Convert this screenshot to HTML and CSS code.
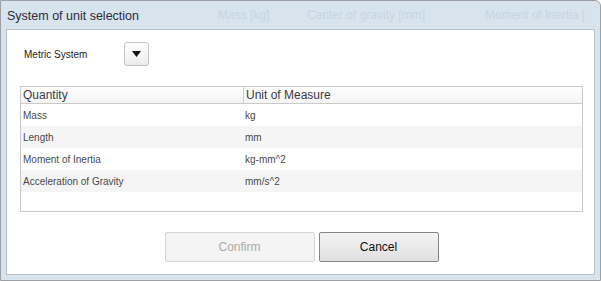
FILE: index.html
```html
<!DOCTYPE html>
<html lang="en">
<head>
  <meta charset="UTF-8">
  <title>System of unit selection</title>
  <link rel="stylesheet" href="styles.css">
</head>
<body>
  <!-- Dialog window -->
  <div class="window">
    <div class="title-bar">
      <span class="title">System of unit selection</span>
      <span class="ghost ghost-mass">Mass [kg]</span>
      <span class="ghost ghost-cog">Center of gravity [mm]</span>
      <span class="ghost ghost-moi">Moment of Inertia [</span>
    </div>

    <div class="content">
      <div class="system-row">
        <span class="system-label">Metric System</span>
        <button class="drop-btn" aria-label="Choose system">
          <svg width="9" height="6" viewBox="0 0 9 6"><path d="M0 0h9L4.5 6z" fill="#111"/></svg>
        </button>
      </div>

      <div class="grid">
        <div class="grid-head">
          <div class="cell head-cell first">Quantity</div>
          <div class="cell head-cell">Unit of Measure</div>
        </div>
        <div class="grid-row">
          <div class="cell first">Mass</div>
          <div class="cell">kg</div>
        </div>
        <div class="grid-row alt">
          <div class="cell first">Length</div>
          <div class="cell">mm</div>
        </div>
        <div class="grid-row">
          <div class="cell first">Moment of Inertia</div>
          <div class="cell">kg-mm^2</div>
        </div>
        <div class="grid-row alt">
          <div class="cell first">Acceleration of Gravity</div>
          <div class="cell">mm/s^2</div>
        </div>
      </div>

      <div class="actions">
        <button class="btn btn-confirm" disabled>Confirm</button>
        <button class="btn btn-cancel">Cancel</button>
      </div>
    </div>
  </div>
</body>
</html>
```

FILE: styles.css
```css
* {
  margin: 0;
  padding: 0;
  box-sizing: border-box;
}

body {
  font-family: 'Liberation Sans', Arial, sans-serif;
  background: #ffffff;
  width: 601px;
  height: 281px;
  overflow: hidden;
}

/* Window frame */
.window {
  width: 601px;
  height: 281px;
  border: 1px solid #9c9fa3;
  border-top-right-radius: 6px;
  background: #d7e3ed;
  padding: 0 5px 5px 5px;
  display: flex;
  flex-direction: column;
}

.title-bar {
  height: 28px;
  display: flex;
  align-items: center;
  white-space: nowrap;
  overflow: hidden;
}

.title {
  width: 212px;
  font-size: 12.5px;
  color: #2e2b38;
  padding-left: 1px;
  padding-top: 1px;
}

/* faded column captions showing through the title bar */
.ghost {
  font-size: 12px;
  color: #c6d6e4;
}

.ghost-mass { width: 89px; }
.ghost-cog { width: 178px; }

/* Content area */
.content {
  flex: 1;
  background: #ffffff;
  border: 1px solid #b7c2cc;
  padding: 12px 11px 0 13px;
  display: flex;
  flex-direction: column;
}

.system-row {
  display: flex;
  align-items: center;
  height: 24px;
  padding-left: 4px;
}

.system-label {
  font-size: 10px;
  color: #1d1d28;
  width: 100px;
}

.drop-btn {
  width: 25px;
  height: 24px;
  border: 1px solid #c4c4c4;
  border-radius: 3px;
  background: linear-gradient(#ffffff, #ececec);
  display: flex;
  align-items: center;
  justify-content: center;
}

/* Unit grid */
.grid {
  margin-top: 20px;
  height: 126px;
  border: 1px solid #c9c9c9;
}

.grid-head {
  display: flex;
  height: 17px;
  border-bottom: 1px solid #cacaca;
  background: linear-gradient(#ffffff, #f4f4f4);
}

.grid-row {
  display: flex;
  height: 22px;
  align-items: center;
}

.grid-row.alt {
  background: #f5f5f5;
}

.cell {
  font-size: 10px;
  color: #4a4a4a;
  padding-left: 2px;
}

.cell.first {
  width: 223px;
}

.grid-row .cell:last-child {
  padding-left: 1px;
}

.head-cell {
  font-size: 12px;
  color: #3a3a44;
  line-height: 16px;
}

.head-cell.first {
  border-right: 1px solid #d0d0d0;
}

/* Buttons */
.actions {
  display: flex;
  justify-content: center;
  gap: 4px;
  margin-top: 20px;
}

.btn {
  height: 30px;
  font-family: 'Liberation Sans', Arial, sans-serif;
  font-size: 12px;
  border-radius: 2px;
}

.btn-confirm {
  width: 150px;
  border: 1px solid #d4d4d4;
  background: #f4f4f4;
  color: #ababab;
}

.btn-cancel {
  width: 120px;
  border: 1px solid #858585;
  background: linear-gradient(#f3f3f3, #e0e0e0);
  color: #111111;
}
```
